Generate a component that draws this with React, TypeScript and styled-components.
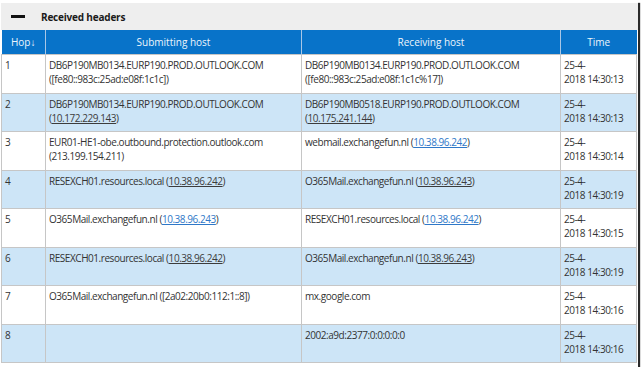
import React from "react";
import styled, { createGlobalStyle } from "styled-components";

type Hop = {
  hop: number;
  from: React.ReactNode;
  by: React.ReactNode;
  date: string;
  time: string;
};

const GlobalStyle = createGlobalStyle`
  html, body {
    margin: 0;
    padding: 0;
    background: #ffffff;
  }
  body {
    font-family: "Open Sans", "Noto Sans", sans-serif;
  }
`;

const Link = styled.a`
  color: #2f78c8;
  text-decoration: underline;
`;

const Host = ({ name, ip }: { name: string; ip?: string }) => (
  <>
    {name}
    {ip && (
      <>
        {" "}(<Link href="#">{ip}</Link>)
      </>
    )}
  </>
);

const HOPS: Hop[] = [
  {
    hop: 1,
    from: "DB6P190MB0134.EURP190.PROD.OUTLOOK.COM ([fe80::983c:25ad:e08f:1c1c])",
    by: "DB6P190MB0134.EURP190.PROD.OUTLOOK.COM ([fe80::983c:25ad:e08f:1c1c%17])",
    date: "25-4-",
    time: "2018 14:30:13",
  },
  {
    hop: 2,
    from: <Host name="DB6P190MB0134.EURP190.PROD.OUTLOOK.COM" ip="10.172.229.143" />,
    by: <Host name="DB6P190MB0518.EURP190.PROD.OUTLOOK.COM" ip="10.175.241.144" />,
    date: "25-4-",
    time: "2018 14:30:13",
  },
  {
    hop: 3,
    from: "EUR01-HE1-obe.outbound.protection.outlook.com (213.199.154.211)",
    by: <Host name="webmail.exchangefun.nl" ip="10.38.96.242" />,
    date: "25-4-",
    time: "2018 14:30:14",
  },
  {
    hop: 4,
    from: <Host name="RESEXCH01.resources.local" ip="10.38.96.242" />,
    by: <Host name="O365Mail.exchangefun.nl" ip="10.38.96.243" />,
    date: "25-4-",
    time: "2018 14:30:19",
  },
  {
    hop: 5,
    from: <Host name="O365Mail.exchangefun.nl" ip="10.38.96.243" />,
    by: <Host name="RESEXCH01.resources.local" ip="10.38.96.242" />,
    date: "25-4-",
    time: "2018 14:30:15",
  },
  {
    hop: 6,
    from: <Host name="RESEXCH01.resources.local" ip="10.38.96.242" />,
    by: <Host name="O365Mail.exchangefun.nl" ip="10.38.96.243" />,
    date: "25-4-",
    time: "2018 14:30:19",
  },
  {
    hop: 7,
    from: "O365Mail.exchangefun.nl ([2a02:20b0:112:1::8])",
    by: "mx.google.com",
    date: "25-4-",
    time: "2018 14:30:16",
  },
  {
    hop: 8,
    from: "",
    by: "2002:a9d:2377:0:0:0:0:0",
    date: "25-4-",
    time: "2018 14:30:16",
  },
];

export default function App() {
  return (
    <>
      <GlobalStyle />
      <Frame>
        <TitleBar>
          <Minus />
          <Title>Received headers</Title>
        </TitleBar>
        <Table>
          <colgroup>
            <col style={{ width: 44 }} />
            <col style={{ width: 256 }} />
            <col style={{ width: 259 }} />
            <col />
          </colgroup>
          <thead>
            <tr>
              <Th>Hop↓</Th>
              <Th>Submitting host</Th>
              <Th>Receiving host</Th>
              <Th>Time</Th>
            </tr>
          </thead>
          <tbody>
            {HOPS.map((h) => (
              <Row key={h.hop} $alt={h.hop % 2 === 0}>
                <Td>{h.hop}</Td>
                <Td>{h.from}</Td>
                <Td>{h.by}</Td>
                <Td>
                  {h.date}
                  <br />
                  {h.time}
                </Td>
              </Row>
            ))}
          </tbody>
        </Table>
      </Frame>
    </>
  );
}

const Frame = styled.div`
  width: 638px;
  height: 367px;
  padding: 3px 0 0 1px;
  box-sizing: border-box;
  background: #ffffff;
  box-shadow: 2px 3px 1px #2a2a2a;
  overflow: hidden;
`;

const TitleBar = styled.div`
  display: flex;
  align-items: center;
  gap: 16px;
  height: 27px;
  padding-left: 10px;
  background: #eeeeee;
`;

const Minus = styled.span`
  display: block;
  width: 14px;
  height: 3px;
  background: #111111;
`;

const Title = styled.span`
  font-size: 10px;
  font-weight: 700;
  letter-spacing: -0.2px;
  color: #1a1a1a;
`;

const Table = styled.table`
  width: 636px;
  border-collapse: collapse;
  table-layout: fixed;
  font-size: 10px;
  letter-spacing: -0.45px;
  color: #333333;
`;

const Th = styled.th`
  height: 24px;
  padding: 0;
  background: #0873c9;
  color: #eef5fc;
  font-weight: 400;
  text-align: center;
  letter-spacing: 0;
  border-left: 1px solid #a9c7e6;
  &:first-child {
    border-left: none;
  }
`;

const Row = styled.tr<{ $alt: boolean }>`
  height: 38.5px;
  background: ${(p) => (p.$alt ? "#cde5f7" : "#ffffff")};

  ${Link} {
    color: ${(p) => (p.$alt ? "#3c3c3c" : "#2f78c8")};
  }
`;

const Td = styled.td`
  padding: 3px 3px 0 3px;
  vertical-align: top;
  line-height: 14px;
  border: 1px solid #c6c6c6;
  word-wrap: break-word;
`;
